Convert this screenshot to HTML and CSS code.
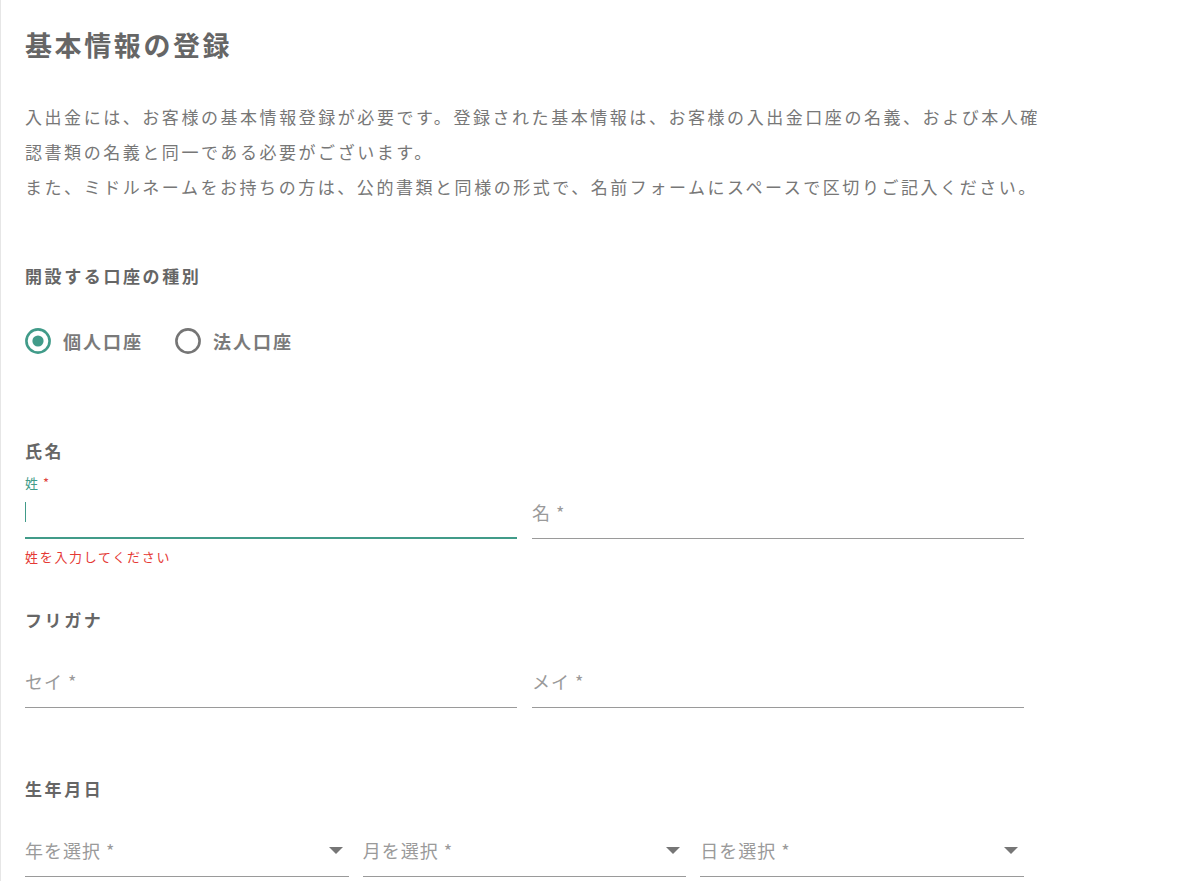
FILE: index.html
```html
<!DOCTYPE html>
<html lang="ja">
<head>
<meta charset="utf-8">
<title>基本情報の登録</title>
<link rel="stylesheet" href="styles.css">
</head>
<body>
<div class="page">
  <h1 class="title">基本情報の登録</h1>
  <p class="intro">入出金には、お客様の基本情報登録が必要です。登録された基本情報は、お客様の入出金口座の名義、および本人確認書類の名義と同一である必要がございます。<br>また、ミドルネームをお持ちの方は、公的書類と同様の形式で、名前フォームにスペースで区切りご記入ください。</p>

  <div class="section section-type">
    <div class="section-label">開設する口座の種別</div>
    <div class="radios">
      <label class="radio">
        <svg class="radio-icon" width="26" height="26" viewBox="0 0 26 26"><circle cx="13" cy="13" r="11.6" fill="none" stroke="#419b89" stroke-width="2.6"/><circle cx="13" cy="13" r="5.6" fill="#419b89"/></svg>
        <span class="radio-text">個人口座</span>
      </label>
      <label class="radio">
        <svg class="radio-icon" width="26" height="26" viewBox="0 0 26 26"><circle cx="13" cy="13" r="11.6" fill="none" stroke="#757575" stroke-width="2.6"/></svg>
        <span class="radio-text">法人口座</span>
      </label>
    </div>
  </div>

  <div class="section section-name">
    <div class="section-label">氏名</div>
    <div class="grid two">
      <div class="field">
        <div class="float-label focused">姓 <span class="req">*</span></div>
        <div class="input focused"><span class="caret"></span></div>
        <div class="helper error">姓を入力してください</div>
      </div>
      <div class="field">
        <div class="float-label"></div>
        <div class="input"><span class="placeholder">名 *</span></div>
        <div class="helper"></div>
      </div>
    </div>
  </div>

  <div class="section">
    <div class="section-label">フリガナ</div>
    <div class="grid two">
      <div class="field">
        <div class="float-label"></div>
        <div class="input"><span class="placeholder">セイ *</span></div>
        <div class="helper"></div>
      </div>
      <div class="field">
        <div class="float-label"></div>
        <div class="input"><span class="placeholder">メイ *</span></div>
        <div class="helper"></div>
      </div>
    </div>
  </div>

  <div class="section">
    <div class="section-label">生年月日</div>
    <div class="grid three">
      <div class="field">
        <div class="float-label"></div>
        <div class="input select"><span class="placeholder">年を選択 *</span><span class="arrow"></span></div>
      </div>
      <div class="field">
        <div class="float-label"></div>
        <div class="input select"><span class="placeholder">月を選択 *</span><span class="arrow"></span></div>
      </div>
      <div class="field">
        <div class="float-label"></div>
        <div class="input select"><span class="placeholder">日を選択 *</span><span class="arrow"></span></div>
      </div>
    </div>
  </div>
</div>
</body>
</html>
```

FILE: styles.css
```css
html, body {
  margin: 0;
  padding: 0;
  background: #ffffff;
}

body {
  font-family: "Noto Sans CJK JP", "Noto Sans", sans-serif;
  color: #666666;
}

.page {
  border-left: 1px solid #e6e6e6;
  padding: 0 24px;
  min-height: 881px;
  box-sizing: border-box;
  overflow: hidden;
}

.title {
  margin: 27px 0 0;
  font-size: 27px;
  line-height: 36px;
  font-weight: 700;
  letter-spacing: 2.6px;
  color: #666666;
}

.intro {
  margin: 36px 0 0;
  width: 1022px;
  font-size: 17px;
  line-height: 35px;
  letter-spacing: 2.55px;
  color: #777777;
  font-weight: 400;
}

.section {
  margin-top: 41px;
  max-width: 999px;
}

.section-type {
  margin-top: 60px;
}

.section-name {
  margin-top: 84px;
}

.section-label {
  font-size: 17px;
  line-height: 24px;
  font-weight: 700;
  letter-spacing: 2.6px;
  color: #666666;
}

.radios {
  display: flex;
  align-items: center;
  gap: 32px;
  margin-top: 39px;
  height: 28px;
}

.radio {
  display: flex;
  align-items: center;
  gap: 12px;
}

.radio-icon {
  display: block;
}

.radio-text {
  font-size: 18px;
  line-height: 28px;
  font-weight: 700;
  letter-spacing: 2px;
  color: #7a7a7a;
}

.grid {
  display: grid;
  margin-top: 10px;
}

.grid.two {
  grid-template-columns: 1fr 1fr;
  column-gap: 15px;
}

.grid.three {
  grid-template-columns: 1fr 1fr 1fr;
  column-gap: 14px;
}

.field {
  display: flex;
  flex-direction: column;
}

.float-label {
  height: 20px;
  font-size: 13px;
  line-height: 20px;
  letter-spacing: 1px;
  color: #419b89;
}

.req {
  color: #e0443e;
}

.input {
  display: flex;
  align-items: center;
  height: 28px;
  padding: 5px 0 12px;
  border-bottom: 1px solid #9a9a9a;
}

.input.focused {
  padding-bottom: 11px;
  border-bottom: 2px solid #419b89;
}

.caret {
  display: block;
  width: 0;
  height: 20px;
  border-left: 1px solid #419b89;
}

.placeholder {
  font-size: 18px;
  line-height: 28px;
  letter-spacing: 1px;
  color: #9a9a9a;
}

.select {
  justify-content: space-between;
  padding-right: 6px;
}

.arrow {
  display: block;
  width: 0;
  height: 0;
  border-left: 7px solid transparent;
  border-right: 7px solid transparent;
  border-top: 7px solid #767676;
}

.helper {
  height: 20px;
  margin-top: 8px;
  font-size: 13px;
  line-height: 20px;
  letter-spacing: 1.7px;
}

.helper.error {
  color: #e53935;
}
```
